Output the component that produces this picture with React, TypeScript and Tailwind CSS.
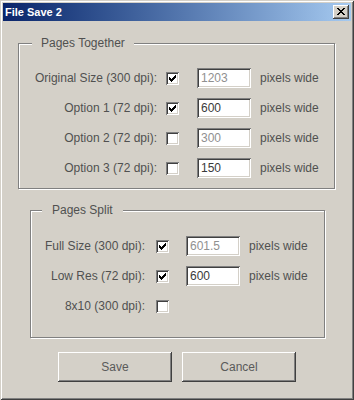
import React from "react";

function Check({ checked }: { checked: boolean }) {
  const cols: [number, number][] = [
    [3, 5],
    [4, 6],
    [5, 7],
    [6, 6],
    [7, 5],
    [8, 4],
    [9, 3],
  ];
  return (
    <div className="relative w-[13px] h-[13px] shrink-0 bg-white shadow-[inset_1px_1px_#808080,inset_-1px_-1px_#ffffff,inset_2px_2px_#404040,inset_-2px_-2px_#d4d0c8]">
      {checked && (
        <svg
          className="absolute left-0 top-0"
          width={13}
          height={13}
          viewBox="0 0 13 13"
          shapeRendering="crispEdges"
        >
          {cols.map(([x, y]) => (
            <rect key={x} x={x} y={y} width={1} height={3} fill="#000" />
          ))}
        </svg>
      )}
    </div>
  );
}

function Field({ value, dim }: { value: string; dim: boolean }) {
  return (
    <div
      className={
        "w-[54px] h-[20px] shrink-0 bg-white pl-[4px] flex items-center text-[12px] leading-[14px] shadow-[inset_1px_1px_#808080,inset_-1px_-1px_#ffffff,inset_2px_2px_#404040,inset_-2px_-2px_#d4d0c8] " +
        (dim ? "text-[#909090]" : "text-[#3a3a3a]")
      }
    >
      {value}
    </div>
  );
}

type RowData = { label: string; checked: boolean; value?: string; dim?: boolean };

function Row1({ r }: { r: RowData }) {
  return (
    <div className="h-[30px] flex items-center">
      <div className="w-[138px] text-right">{r.label}</div>
      <div className="ml-[9px]">
        <Check checked={r.checked} />
      </div>
      {r.value !== undefined && (
        <>
          <div className="ml-[18px]">
            <Field value={r.value} dim={!!r.dim} />
          </div>
          <div className="ml-[9px]">pixels wide</div>
        </>
      )}
    </div>
  );
}

function Row2({ r }: { r: RowData }) {
  return (
    <div className="h-[30px] flex items-center">
      <div className="w-[114px] text-right">{r.label}</div>
      <div className="ml-[11px]">
        <Check checked={r.checked} />
      </div>
      {r.value !== undefined && (
        <>
          <div className="ml-[17px]">
            <Field value={r.value} dim={!!r.dim} />
          </div>
          <div className="ml-[9px]">pixels wide</div>
        </>
      )}
    </div>
  );
}

function Button({ children }: { children: React.ReactNode }) {
  return (
    <div className="w-[114px] h-[30px] flex items-center justify-center bg-[#d4d0c8] text-[#5a5a5a] shadow-[inset_-1px_-1px_#404040,inset_1px_1px_#ffffff,inset_-2px_-2px_#808080,inset_2px_2px_#d4d0c8]">
      {children}
    </div>
  );
}

export default function App() {
  const together: RowData[] = [
    { label: "Original Size (300 dpi):", checked: true, value: "1203", dim: true },
    { label: "Option 1 (72 dpi):", checked: true, value: "600" },
    { label: "Option 2 (72 dpi):", checked: false, value: "300", dim: true },
    { label: "Option 3 (72 dpi):", checked: false, value: "150" },
  ];
  const split: RowData[] = [
    { label: "Full Size (300 dpi):", checked: true, value: "601.5", dim: true },
    { label: "Low Res (72 dpi):", checked: true, value: "600" },
    { label: "8x10 (300 dpi):", checked: false },
  ];
  const xPix: [number, number][] = [
    [0, 0], [1, 0], [6, 0], [7, 0],
    [1, 1], [2, 1], [5, 1], [6, 1],
    [2, 2], [3, 2], [4, 2], [5, 2],
    [3, 3], [4, 3],
    [2, 4], [3, 4], [4, 4], [5, 4],
    [1, 5], [2, 5], [5, 5], [6, 5],
    [0, 6], [1, 6], [6, 6], [7, 6],
  ];
  return (
    <div className="w-[354px] h-[400px] bg-[#d4d0c8] p-[3px] flex flex-col font-['Liberation_Sans',Arial,sans-serif] text-[12px] leading-[14px] text-[#505050] shadow-[inset_1px_1px_#d4d0c8,inset_-1px_-1px_#404040,inset_2px_2px_#ffffff,inset_-2px_-2px_#808080]">
      <div className="h-[18px] shrink-0 bg-linear-to-r from-[#0a246a] to-[#a6caf0] flex items-center justify-between pl-[2px] pr-[2px]">
        <span className="text-white font-bold text-[11px] leading-[13px]">File Save 2</span>
        <div className="w-[16px] h-[14px] bg-[#d4d0c8] relative shadow-[inset_-1px_-1px_#404040,inset_1px_1px_#ffffff,inset_-2px_-2px_#808080,inset_2px_2px_#d4d0c8]">
          <svg
            className="absolute left-[4px] top-[3px]"
            width={8}
            height={7}
            viewBox="0 0 8 7"
            shapeRendering="crispEdges"
          >
            {xPix.map(([x, y]) => (
              <rect key={x + "-" + y} x={x} y={y} width={1} height={1} fill="#000" />
            ))}
          </svg>
        </div>
      </div>

      <div className="relative mt-[22px] ml-[15px] w-[317px] border border-[#808080] shadow-[1px_1px_#ffffff,inset_1px_1px_#ffffff] pt-[19px] pb-[5px]">
        <span className="absolute left-[13px] top-[-8px] px-[9px] bg-[#d4d0c8]">Pages Together</span>
        {together.map((r) => (
          <Row1 key={r.label} r={r} />
        ))}
      </div>

      <div className="relative mt-[21px] ml-[27px] w-[295px] border border-[#808080] shadow-[1px_1px_#ffffff,inset_1px_1px_#ffffff] pt-[20px] pb-[16px]">
        <span className="absolute left-[11px] top-[-8px] px-[10px] bg-[#d4d0c8]">Pages Split</span>
        {split.map((r) => (
          <Row2 key={r.label} r={r} />
        ))}
      </div>

      <div className="flex gap-[10px] ml-[55px] mt-[14px]">
        <Button>Save</Button>
        <Button>Cancel</Button>
      </div>
    </div>
  );
}
